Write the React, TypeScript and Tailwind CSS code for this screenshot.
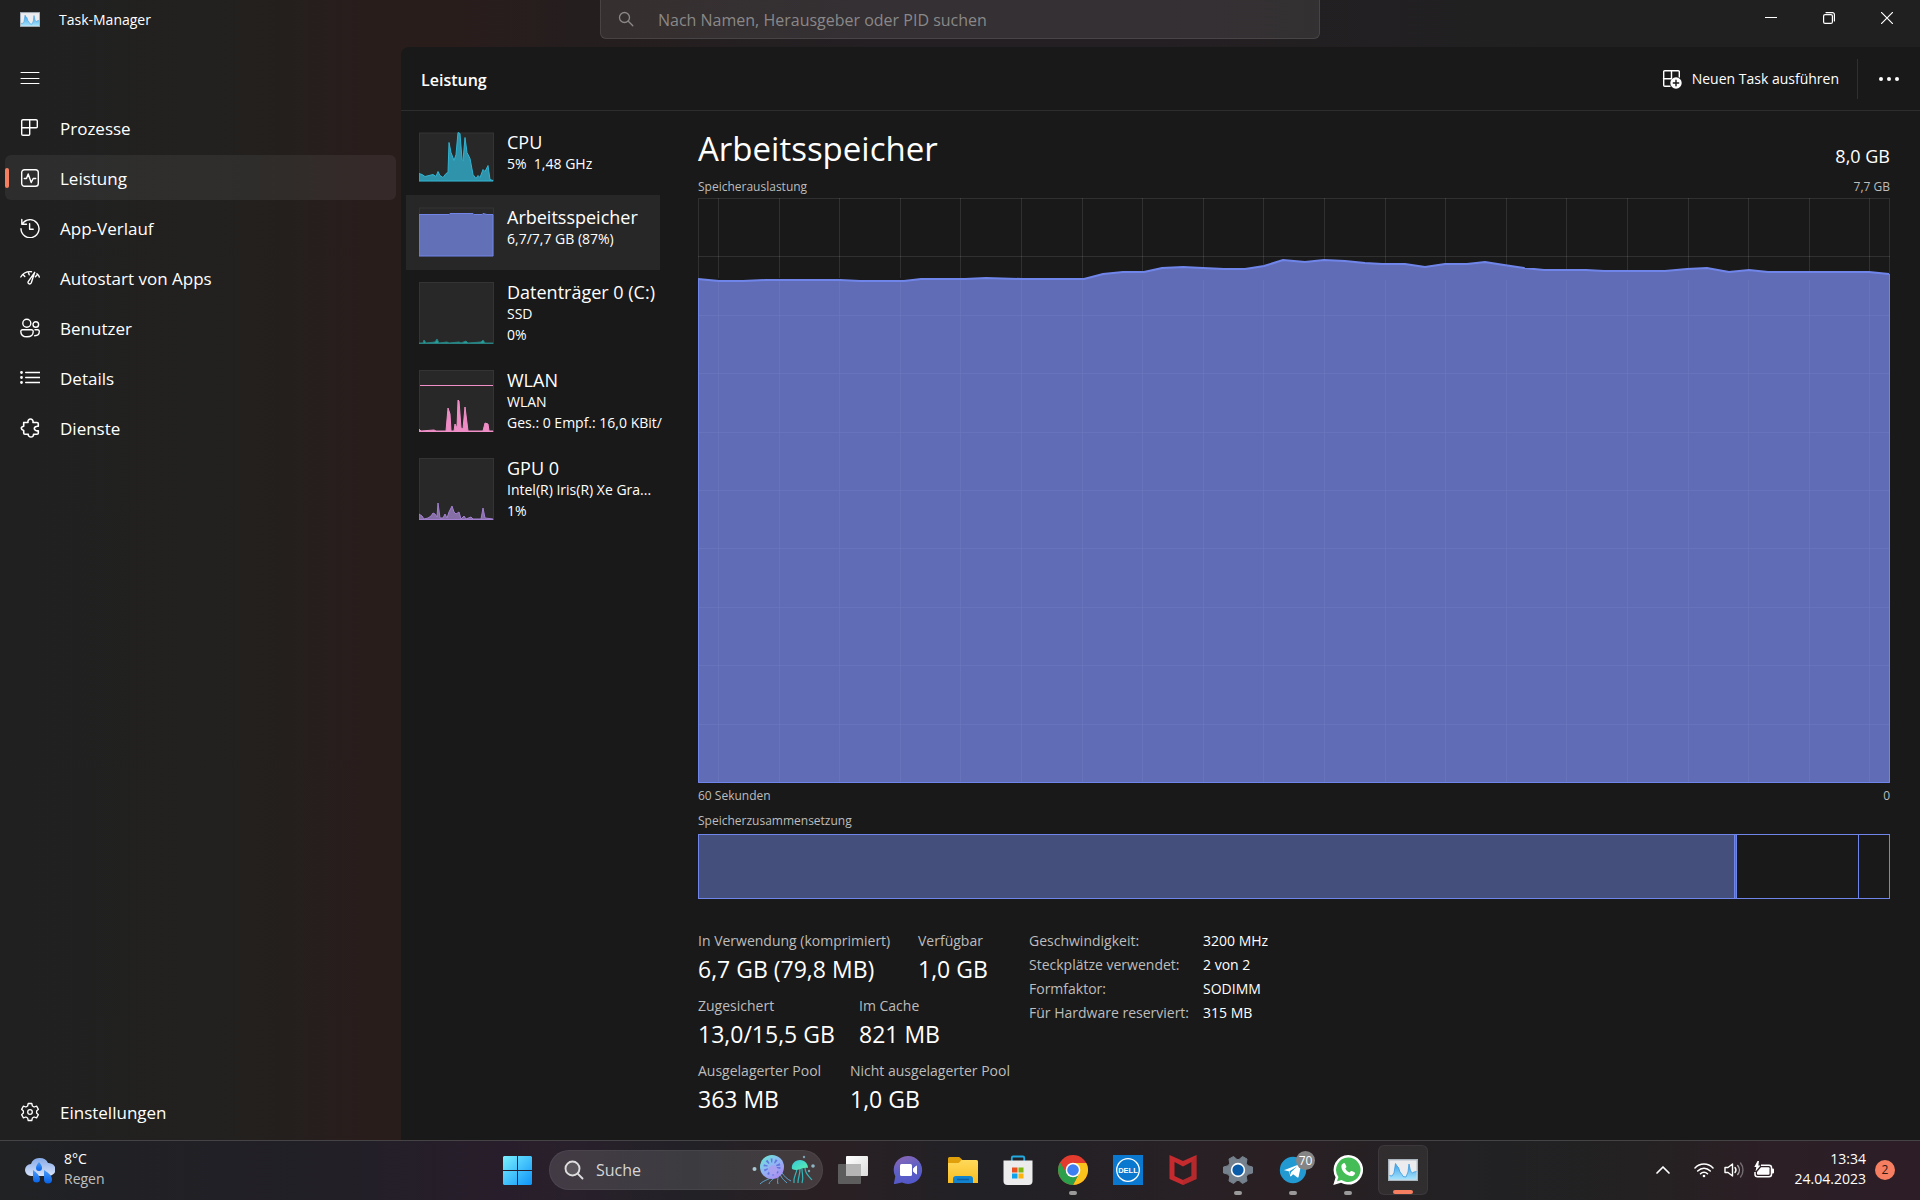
import type { ReactNode } from "react";

const stroke = {
  fill: "none",
  stroke: "currentColor",
  strokeLinecap: "round" as const,
  strokeLinejoin: "round" as const,
};

function LineIcon({ children, width = 1.4 }: { children: ReactNode; width?: number }) {
  return (
    <svg viewBox="0 0 20 20" className="size-5 shrink-0" {...stroke} strokeWidth={width} aria-hidden="true">
      {children}
    </svg>
  );
}

function TaskManagerLogo({ className }: { className: string }) {
  return (
    <svg viewBox="0 0 30 22" className={className} aria-hidden="true">
      <defs>
        <linearGradient id="tmFill" x1="0" y1="0" x2="0" y2="1">
          <stop offset="0" stopColor="#3aa0e8" />
          <stop offset="1" stopColor="#a5e2fc" />
        </linearGradient>
      </defs>
      <rect x="0.7" y="0.7" width="28.6" height="20.6" fill="#ececee" stroke="#aab4bd" strokeWidth="1.4" />
      <path
        d="M1.5 16.5 4 17l2-3L7.5 4.5 9 7l1.500 1.500L12 13l2 2.500 1 2 3 .5 2-5 1-8 1.500 7 2 2 1.500-1 2.500-.5V20.500H1.500Z"
        fill="url(#tmFill)"
      />
      <path
        d="M1.500 16.500 4 17l2-3L7.500 4.500 9 7l1.500 1.500L12 13l2 2.500 1 2 3 .5 2-5 1-8 1.500 7 2 2 1.500-1 2.500-.5"
        fill="none"
        stroke="#3a9be0"
        strokeWidth="0.8"
      />
    </svg>
  );
}

const navItems: { label: string; icon: ReactNode; active?: boolean }[] = [
  {
    label: "Prozesse",
    icon: (
      <LineIcon>
        <path d="M3 1.700h13a1.300 1.300 0 0 1 1.300 1.300v5.700a1 1 0 0 1-1 1H9.700v6.600a1 1 0 0 1-1 1H3A1.300 1.300 0 0 1 1.700 16V3A1.300 1.300 0 0 1 3 1.700ZM9.700 1.700v8H1.700" />
      </LineIcon>
    ),
  },
  {
    label: "Leistung",
    active: true,
    icon: (
      <LineIcon>
        <rect x="1.700" y="1.700" width="16.600" height="16.600" rx="2.800" />
        <path d="M4.300 10.500h2.200L8.200 6l3 8.500 2-4h2.500" />
      </LineIcon>
    ),
  },
  {
    label: "App-Verlauf",
    icon: (
      <LineIcon>
        <path d="M1.800 1.500v4.700h4.700M2.300 6A9 9 0 1 1 1 10.800M9.600 5.700v5.500h3.600" />
      </LineIcon>
    ),
  },
  {
    label: "Autostart von Apps",
    icon: (
      <LineIcon>
        <path d="M.800 9C3 5 6.500 3.300 11.500 3.700M17 5.700c1.200.9 2 2 2.300 3.300M3 6.500l1.800 2M8.200 4l1 2.800M17 7l-1.600 1.800M14.700 4.300 8.200 13.700c-.5 1 .2 2.300 1.300 2.300 1 0 1.500-.5 1.800-1.200Z" />
      </LineIcon>
    ),
  },
  {
    label: "Benutzer",
    icon: (
      <LineIcon>
        <circle cx="6.800" cy="5.300" r="4" />
        <circle cx="15.800" cy="6.500" r="2.800" />
        <path d="M2.500 11.800h9a1.700 1.700 0 0 1 1.700 1.700c0 3.500-2.700 5.300-6.200 5.300s-6.200-1.800-6.200-5.300a1.700 1.700 0 0 1 1.700-1.700ZM15 11.800h2.600a1.700 1.700 0 0 1 1.700 1.700c0 2.500-1.800 4.200-4.600 4.300" />
      </LineIcon>
    ),
  },
  {
    label: "Details",
    icon: (
      <LineIcon>
        <path d="M5.700 4.500h14M5.700 9.500h14M5.700 14.500h14" />
        <path d="M1.500 4.500h.01M1.500 9.500h.01M1.500 14.500h.01" strokeWidth="2.800" />
      </LineIcon>
    ),
  },
  {
    label: "Dienste",
    icon: (
      <LineIcon width={1.6}>
        <path d="M4 4.500h4C7.500 2.500 9 1 10.500 1s3 1.500 2.500 3.500h4a1.300 1.300 0 0 1 1.300 1.300v2.500c-2-.4-4 .7-4 2.200s2 2.700 4 2.200V15a1.300 1.300 0 0 1-1.300 1.300h-3.500c.3 1.600-1 2.700-2.500 2.700s-3-1.100-2.700-2.700H5A1.300 1.300 0 0 1 3.700 15v-2.500C2 12 1.300 11.200 1.300 10.300S2 8.600 3.700 8.300V4.500" />
      </LineIcon>
    ),
  },
];

function GearIcon() {
  return (
    <LineIcon width={1.3}>
      <path d="M8.200 1.500h3.600l.6 2.500 1.700 1 2.500-.8 1.800 3.100L16.600 9v2l1.800 1.700-1.800 3.100-2.500-.8-1.700 1-.6 2.500H8.200L7.600 16l-1.700-1-2.500.8-1.800-3.100L3.400 11V9L1.600 7.300l1.800-3.100 2.500.8 1.700-1Z" />
      <circle cx="10" cy="10" r="2.300" />
    </LineIcon>
  );
}

function NavButton({ label, icon, active }: { label: string; icon: ReactNode; active?: boolean }) {
  return (
    <button
      type="button"
      aria-current={active ? "page" : undefined}
      className={
        active
          ? "relative flex h-[45px] w-full items-center gap-5 rounded-md bg-white/6 px-[15px] text-left text-[17px]"
          : "relative flex h-[45px] w-full items-center gap-5 rounded-md px-[15px] text-left text-[17px]"
      }
    >
      {active && <span className="absolute left-0 h-5 w-1 rounded-full bg-[#f57f60]" />}
      {icon}
      <span className="pt-0.5">{label}</span>
    </button>
  );
}

type Perf = {
  title: string;
  lines: string[];
  active?: boolean;
  short?: boolean;
  color: string;
  fill: string;
  area: string;
  marker?: number;
};

const perfItems: Perf[] = [
  {
    title: "CPU",
    lines: ["5%  1,48 GHz"],
    short: true,
    color: "#2fb4d3",
    fill: "#2f94ab",
    area: "0,41 3,42 6,44 10,43 14,42 17,44 19,39 21,43 24,45 27,41 29,40 30,10 32,20 35,28 37,22 39,0 41,1 43,27 44,28 46,5 48,20 51,26 54,42 57,46 59,43 61,45 64,37 66,39 69,33 71,47 74,48",
  },
  {
    title: "Arbeitsspeicher",
    lines: ["6,7/7,7 GB (87%)"],
    short: true,
    active: true,
    color: "#7184e8",
    fill: "#6270b8",
    area: "0,7 30,7 31,6 54,6 55,7 63,7 64,6 68,7 74,7",
  },
  {
    title: "Datenträger 0 (C:)",
    lines: ["SSD", "0%"],
    color: "#27807f",
    fill: "#24a09a",
    area: "0,61 4,61 5,58 7,61 16,60 18,57 20,61 28,60 30,61 40,60 42,61 47,59 49,61 62,60 64,58 66,61 74,61",
  },
  {
    title: "WLAN",
    lines: ["WLAN", "Ges.: 0 Empf.: 16,0 KBit/"],
    color: "#f08fc8",
    fill: "#ef8cc6",
    area: "0,59 2,61 15,60 17,61 27,61 29,38 31,44 32,61 35,61 36,54 38,58 39,30 40,31 42,58 44,59 46,37 49,61 64,61 66,53 69,54 70,61 74,61",
    marker: 15,
  },
  {
    title: "GPU 0",
    lines: ["Intel(R) Iris(R) Xe Gra...", "1%"],
    color: "#a280cf",
    fill: "#866fa5",
    area: "0,56 3,58 5,61 9,60 12,58 14,55 16,56 18,59 19,45 21,60 24,60 26,56 28,60 30,54 33,48 35,54 37,56 40,54 42,61 45,58 47,61 52,59 54,61 62,61 64,50 66,60 74,61",
  },
];

function PerfCard({ item }: { item: Perf }) {
  const h = item.short ? 49 : 62;
  return (
    <button
      type="button"
      className={
        item.active
          ? "flex w-[254px] items-start gap-[13px] bg-[#272727] pt-3 pb-[13px] pl-[13px] text-left"
          : "flex w-[254px] items-start gap-[13px] pt-3 pb-[13px] pl-[13px] text-left"
      }
    >
      <svg
        viewBox={`0 0 75 ${h}`}
        className={item.short ? "h-[50px] w-[75px] shrink-0" : "h-[62px] w-[75px] shrink-0"}
        aria-hidden="true"
      >
        <rect x="0.5" y="0.5" width="74" height={h - 1} fill="#282828" stroke="#343434" />
        <polygon points={`0,${h - 0.5} ${item.area} 74,${h - 0.5}`} fill={item.fill} stroke={item.color} />
        {item.marker && <path d={`M1 ${item.marker + 0.5}H74`} stroke={item.color} />}
      </svg>
      <span className="flex flex-col whitespace-pre">
        <span className="text-lg leading-[21px]">{item.title}</span>
        {item.lines.map((l) => (
          <span key={l} className="text-sm leading-[21px]">
            {l}
          </span>
        ))}
      </span>
    </button>
  );
}

const usage =
  "0,81 21,83 45,83 67,82 142,82 162,83 206,83 223,81 267,81 288,80 324,81 386,81 405,76 425,74 446,74 464,70 485,69 505,70 526,71 547,71 566,68 585,62 607,64 626,62 647,63 667,65 684,66 707,66 727,69 747,66 769,66 787,64 806,67 826,70 846,72 888,72 906,73 967,73 989,71 1009,70 1031,74 1051,72 1070,74 1171,74 1191,76";

function UsageChart() {
  const vertical = Array.from({ length: 20 }, (_, i) => Math.round(20 + i * 60.6) + 0.5);
  const horizontal = Array.from({ length: 9 }, (_, i) => Math.round((i + 1) * 58.4) + 0.5);
  return (
    <svg
      viewBox="0 0 1192 585"
      preserveAspectRatio="none"
      className="block min-h-0 w-full flex-1"
      role="img"
      aria-label="Speicherauslastung"
    >
      <polygon points={`0,585 ${usage} 1192,585`} fill="#606db6" />
      <g stroke="#ffffff" strokeOpacity="0.1">
        {vertical.map((x) => (
          <path key={x} d={`M${x} 0V80`} />
        ))}
        {horizontal.slice(0, 1).map((y) => (
          <path key={y} d={`M0 ${y}H1192`} />
        ))}
        <rect x="0.5" y="0.5" width="1191" height="584" fill="none" />
      </g>
      <polygon points={`0,585 ${usage} 1192,585`} fill="#606db6" />
      <g stroke="#6d79c0" strokeOpacity="0.6">
        {vertical.map((x) => (
          <path key={x} d={`M${x} 82V585`} />
        ))}
        {horizontal.slice(1).map((y) => (
          <path key={y} d={`M0 ${y}H1192`} />
        ))}
      </g>
      <polyline points={usage} fill="none" stroke="#7085ea" strokeWidth="2" />
      <path d="M0.500 81V584.500H1191.500V76" fill="none" stroke="#7085ea" />
    </svg>
  );
}

function Stat({ label, value, className = "" }: { label: string; value: string; className?: string }) {
  return (
    <div className={className}>
      <dt className="text-sm leading-5 whitespace-nowrap text-[#bdbdbd]">{label}</dt>
      <dd className="pt-0.5 text-[23px] leading-8 whitespace-nowrap">{value}</dd>
    </div>
  );
}

const hardware = [
  ["Geschwindigkeit:", "3200 MHz"],
  ["Steckplätze verwendet:", "2 von 2"],
  ["Formfaktor:", "SODIMM"],
  ["Für Hardware reserviert:", "315 MB"],
];

function App30({ children }: { children: ReactNode }) {
  return (
    <svg viewBox="0 0 30 30" className="size-[30px]" aria-hidden="true">
      {children}
    </svg>
  );
}

const taskbarApps: { name: string; running?: boolean; active?: boolean; badge?: string; icon: ReactNode }[] = [
  {
    name: "Aktive Anwendungen",
    icon: (
      <App30>
        <defs>
          <linearGradient id="tvFill" x1="0" y1="0" x2="1" y2="1">
            <stop offset="0" stopColor="#fff" />
            <stop offset="1" stopColor="#dcdcdc" />
          </linearGradient>
        </defs>
        <rect x="8" y="1" width="22" height="20" rx="1" fill="url(#tvFill)" />
        <rect x="0" y="9" width="23" height="20" rx="1" fill="#5d5d5d" />
        <rect x="8" y="9" width="15" height="12" fill="#b5b5b5" />
      </App30>
    ),
  },
  {
    name: "Chat",
    icon: (
      <App30>
        <defs>
          <linearGradient id="chatFill" x1="0" y1="0" x2="0.300" y2="1">
            <stop offset="0" stopColor="#8f68b4" />
            <stop offset="0.600" stopColor="#5b5fc7" />
            <stop offset="1" stopColor="#5558c8" />
          </linearGradient>
        </defs>
        <path d="M15 1a14 14 0 1 1-6 26.600L2 29c-.8.200-1.300-.3-1-1l1.300-6.500A14 14 0 0 1 15 1Z" fill="url(#chatFill)" />
        <rect x="7" y="9" width="12" height="12" rx="1.500" fill="#fff" />
        <path d="m20.500 13.500 3-2.500v8l-3-2.500Z" fill="#fff" stroke="#fff" strokeLinejoin="round" />
      </App30>
    ),
  },
  {
    name: "Explorer",
    icon: (
      <App30>
        <defs>
          <linearGradient id="folderFill" x1="0" y1="0" x2="0" y2="1">
            <stop offset="0" stopColor="#ffd95a" />
            <stop offset="1" stopColor="#f9bd22" />
          </linearGradient>
        </defs>
        <path d="M0 3.500A1.500 1.500 0 0 1 1.500 2h8.700c1 0 1.500.3 2.200 1l2.100 2H28a2 2 0 0 1 2 2v5H0Z" fill="#e0a00c" />
        <path d="M0 8h9.500c1.200 0 1.700-.4 2.500-1.200L13.500 5H28a2 2 0 0 1 2 2v21H0Z" fill="url(#folderFill)" />
        <path d="M5 28v-4a3 3 0 0 1 3-3h14a3 3 0 0 1 3 3v4Z" fill="#1283cf" />
        <path d="M9 24.500h12" stroke="#0b5ea2" strokeWidth="1.500" />
      </App30>
    ),
  },
  {
    name: "Microsoft Store",
    icon: (
      <App30>
        <path d="M8.800 7V2.800c0-.7.500-1.300 1.300-1.300h9.800c.8 0 1.300.6 1.300 1.300V7" fill="none" stroke="#22abe2" strokeWidth="1.800" />
        <path d="M.500 5.500h29V26a4 4 0 0 1-4 4h-21a4 4 0 0 1-4-4Z" fill="#ececec" />
        <path d="M9 12.500h5.500v5H9Z" fill="#e8501f" />
        <path d="M15.500 12.500h5v5h-5Z" fill="#7fb60f" />
        <path d="M9 18.500h5.500v5H9Z" fill="#0fa3ec" />
        <path d="M15.500 18.500h5v5h-5Z" fill="#fcb40c" />
      </App30>
    ),
  },
  {
    name: "Google Chrome",
    running: true,
    icon: (
      <App30>
        <circle cx="15" cy="15" r="15" fill="#e33b2e" />
        <path d="M15 8h13.300A15 15 0 0 1 15 30l6.100-11.500Z" fill="#fcc21c" />
        <path d="M2.010 7.500A15 15 0 0 0 15 30l6-11.500-6-3-6.100 3Z" fill="#2c9f4b" />
        <circle cx="15" cy="15" r="7.300" fill="#fff" />
        <circle cx="15" cy="15" r="5.800" fill="#3d7ff0" />
      </App30>
    ),
  },
  {
    name: "Dell",
    icon: (
      <App30>
        <rect width="30" height="30" fill="#0a78cf" />
        <circle cx="15" cy="15" r="11.300" fill="none" stroke="#fff" strokeWidth="1.300" />
        <text x="15" y="17.600" textAnchor="middle" fontSize="7.500" fontWeight="700" fill="#fff" fontFamily="Liberation Sans, sans-serif">
          DELL
        </text>
      </App30>
    ),
  },
  {
    name: "McAfee",
    icon: (
      <App30>
        <path d="m1.500 0 13.500 6L28.500 0v24L15 30 1.500 24Zm5 7v14L15 25l8.500-4V7L15 11.500Z" fill="#c52b2e" fillRule="evenodd" />
        <path d="m28.500 0-5 7v14L15 25v5l13.500-6Z" fill="#a8282b" opacity=".6" />
      </App30>
    ),
  },
  {
    name: "Einstellungen",
    running: true,
    icon: (
      <App30>
        <path
          d="M10.500 1.500 14 4.500h2l3.500-3 4.500 2.500-.7 4.300 1.500 2.400 4.700 1.300v6l-4.700 1.300-1.500 2.400.7 4.300-4.500 2.500-3.500-3h-2l-3.500 3L6 26l.7-4.300-1.500-2.400L.500 18v-6l4.700-1.300 1.500-2.400L6 4Z"
          fill="#75818c"
          stroke="#75818c"
          strokeLinejoin="round"
        />
        <circle cx="15" cy="15" r="7.200" fill="#fff" />
        <circle cx="15" cy="15" r="5.600" fill="#0b5ca8" />
      </App30>
    ),
  },
  {
    name: "Telegram",
    running: true,
    badge: "70",
    icon: (
      <App30>
        <circle cx="15" cy="15" r="13.200" fill="#229ad1" />
        <path d="M6.500 15 22 9c.8-.3 1.300.1 1 1.200l-2.400 11.500c-.2 1-.8 1.100-1.500.6l-4-3-2 2c-.3.300-.8.200-.9-.3l-1-4.500-4.700-1.300c-.6-.1-.6-.3 0-.5Z" fill="#fff" />
        <path d="m11.500 16.300 7.500-4.800-6 5.800-.3 3Z" fill="#229ad1" />
      </App30>
    ),
  },
  {
    name: "WhatsApp",
    running: true,
    icon: (
      <App30>
        <path d="M15.200 0A14.800 14.800 0 1 1 8 27.700L.300 30l2.300-7.700A14.800 14.800 0 0 1 15.200 0Z" fill="#fff" />
        <path d="M15.200 2.600A12.200 12.200 0 1 1 8.500 24.900L4 26.300l1.400-4.400A12.200 12.200 0 0 1 15.200 2.600Z" fill="#45bd56" />
        <path
          d="M10.500 8.200c.6-.3 1.300-.1 1.600.5l1.200 2.600c.2.500.1 1-.3 1.400l-.8.900c1 2 2.400 3.200 4.300 4l1-1.200c.4-.4.900-.5 1.400-.3l2.500 1.200c.6.300.7.800.5 1.400-.6 1.700-2.200 2.600-3.800 2.400-4.900-.7-9.200-4.800-9.700-9.200-.2-1.500.700-3 2.100-3.700Z"
          fill="#fff"
        />
      </App30>
    ),
  },
  {
    name: "Task-Manager",
    running: true,
    active: true,
    icon: <TaskManagerLogo className="h-[22px] w-[30px]" />,
  },
];

function Jellyfish() {
  return (
    <svg viewBox="0 0 64 32" className="h-8 w-16 shrink-0" fill="none" aria-hidden="true">
      <defs>
        <linearGradient id="jellyBig" x1="0" y1="0" x2="0.700" y2="1">
          <stop offset="0" stopColor="#62f0d0" />
          <stop offset="0.500" stopColor="#8fb8f4" />
          <stop offset="1" stopColor="#a98cf0" />
        </linearGradient>
        <linearGradient id="jellySmall" x1="0" y1="0" x2="1" y2="1">
          <stop offset="0" stopColor="#34c7d8" />
          <stop offset="1" stopColor="#5df0b0" />
        </linearGradient>
      </defs>
      <path
        d="M22 20c-3 6-9 5-14 10M24 21c-2 5-6 5-7 9M26 22c0 4-1 5 0 8M28 20c2 5 4 6 7 9M30 19c3 4 5 6 9 8"
        stroke="#5fa5cc"
        strokeWidth="1"
      />
      <circle cx="20" cy="13" r="12" fill="url(#jellyBig)" />
      <circle cx="20" cy="13" r="6.500" stroke="#5966d8" strokeWidth="4" strokeDasharray="1.600 2.500" opacity=".8" />
      <circle cx="21" cy="16" r="4.500" fill="#a9a0f0" />
      <path d="M45 15c-1 6-4 8-3 14M48 15c0 6-2 8-2 14M50 15c0 6 2 8 0 14M53 14c0 6 4 8 7 12" stroke="#36b6b8" strokeWidth="1.200" />
      <path d="M40 15c-1-5 3-9 8-9 5 0 8 4 8 8-5-1-10 4-16 1Z" fill="url(#jellySmall)" />
      <circle cx="2.500" cy="15" r="2" fill="#a9c8d4" />
      <circle cx="52" cy="3" r="1.200" fill="#7aa5b0" />
      <circle cx="61" cy="12" r="1.800" fill="#8fb4c4" />
      <circle cx="57" cy="17" r="1.200" fill="#7aa5b0" />
    </svg>
  );
}

function Taskbar() {
  return (
    <footer className="grid h-[60px] shrink-0 grid-cols-[1fr_auto_1fr] items-center border-t border-[#454345] bg-[linear-gradient(90deg,#202224_0%,#221f27_18%,#281e2b_26%,#28202b_30%,#222126_36%,#2a2023_43%,#212126_51%,#2a2024_66%,#212123_78%,#232122_85%,#2c1f25_92%,#2c1d27_100%)] pb-px">
      <button type="button" className="flex w-fit items-center gap-[9px] pl-[25px] text-left">
        <svg viewBox="0 0 30 27" className="h-[27px] w-[30px]" aria-hidden="true">
          <defs>
            <linearGradient id="cloudFill" x1="0" y1="0" x2="0" y2="1">
              <stop offset="0" stopColor="#86aae8" />
              <stop offset="1" stopColor="#d7e3fa" />
            </linearGradient>
            <linearGradient id="dropFill" x1="0" y1="0" x2="0" y2="1">
              <stop offset="0" stopColor="#4a9cf8" />
              <stop offset="1" stopColor="#0561e8" />
            </linearGradient>
          </defs>
          <path d="M6 7a9 8 0 0 1 17-1 7 6.500 0 0 1 1 13H6A6 6 0 0 1 6 7Z" fill="url(#cloudFill)" />
          <path d="M14 5c2 2.500 3 4 3 6a3 3 0 0 1-6 0c0-2 1-3.500 3-6Z" fill="url(#dropFill)" />
          <path d="M8 13c4 3 7 6 7 9a3.500 3.500 0 0 1-7 0ZM19 13c5 3 8 6 8 9.500a4 4 0 0 1-8 0Z" fill="url(#dropFill)" />
        </svg>
        <span className="flex flex-col pb-0.5 text-sm leading-5">
          <span>8°C</span>
          <span className="text-[#c0c0c0]">Regen</span>
        </span>
      </button>

      <div className="flex items-center gap-[5px]">
        <button type="button" aria-label="Start" className="flex h-[50px] w-[50px] items-center justify-center">
          <svg viewBox="0 0 29 29" className="size-[29px]" aria-hidden="true">
            <defs>
              <linearGradient id="winFill" gradientUnits="userSpaceOnUse" x1="0" y1="0" x2="29" y2="29">
                <stop offset="0" stopColor="#7af0ff" />
                <stop offset="1" stopColor="#0e94f8" />
              </linearGradient>
            </defs>
            <path d="M1 0h13v14H0V1ZM15 0h13l1 1v13H15ZM0 15h14v14H1l-1-1ZM15 15h14v13l-1 1H15Z" fill="url(#winFill)" />
          </svg>
        </button>
        <label className="ml-0.5 flex h-10 w-[274px] items-center rounded-full border border-white/5 bg-white/12 pr-1.5 pl-3.5">
          <svg viewBox="0 0 20 20" className="size-5 shrink-0 text-[#dedede]" {...stroke} strokeWidth="1.900" aria-hidden="true">
            <circle cx="8.500" cy="8.500" r="7" fill="#ffffff22" />
            <path d="m13.700 13.700 4.800 4.800" />
          </svg>
          <input
            type="search"
            aria-label="Suche"
            placeholder="Suche"
            className="min-w-0 flex-1 bg-transparent pl-3 text-base outline-none placeholder:text-[#d6d6d6]"
          />
          <Jellyfish />
        </label>
        {taskbarApps.map((app) => (
          <button
            key={app.name}
            type="button"
            aria-label={app.name}
            className={
              app.active
                ? "relative flex h-[50px] w-[50px] items-center justify-center rounded-md border border-white/5 bg-white/6"
                : "relative flex h-[50px] w-[50px] items-center justify-center"
            }
          >
            {app.icon}
            {app.badge && (
              <span className="absolute top-1.5 right-[3px] flex size-[19px] items-center justify-center rounded-full bg-[#858585] text-xs">
                {app.badge}
              </span>
            )}
            {app.running && (
              <span
                className={
                  app.active
                    ? "absolute bottom-0 h-1 w-5 rounded-full bg-[#f57f60]"
                    : "absolute bottom-0 h-1 w-2 rounded-full bg-[#9a9a9a]"
                }
              />
            )}
          </button>
        ))}
      </div>

      <div className="flex items-center justify-end pr-[25px]">
        <button type="button" aria-label="Ausgeblendete Symbole einblenden" className="mr-[23px]">
          <svg viewBox="0 0 16 16" className="size-4" {...stroke} strokeWidth="1.700" aria-hidden="true">
            <path d="m2 11 6-6 6 6" />
          </svg>
        </button>
        <button type="button" aria-label="Netzwerk, Ton und Akku" className="flex items-center gap-2.5">
          <svg viewBox="0 0 20 16" className="h-4 w-5" {...stroke} strokeWidth="1.500" aria-hidden="true">
            <path d="M1 6c5-5.300 13-5.300 18 0M3.700 9c3.700-3.800 8.900-3.800 12.600 0M6.500 11.800c2-2.100 5-2.100 7 0" />
            <circle cx="10" cy="14" r="1.300" fill="currentColor" stroke="none" />
          </svg>
          <svg viewBox="0 0 20 20" className="size-5" {...stroke} strokeWidth="1.400" aria-hidden="true">
            <path d="M1 7.500h3L8.500 4v12L4 12.500H1Z" />
            <path d="M11 7.500c1.200 1.500 1.200 3.500 0 5" />
            <path d="M13.700 5.500c2.200 2.600 2.200 6.400 0 9" opacity=".6" />
            <path d="M16.500 3c3.300 4 3.300 10 0 14" opacity=".35" />
          </svg>
          <svg viewBox="0 0 20 18" className="h-[18px] w-5" fill="none" aria-hidden="true">
            <path d="M7 4.200h8a2.500 2.500 0 0 1 2.500 2.500v6.600a2.500 2.500 0 0 1-2.500 2.500H3.500A2.500 2.500 0 0 1 1 13.300V11" stroke="#fff" strokeWidth="1.500" />
            <path d="M7 6.200h7.500a1 1 0 0 1 1 1v5.600a1 1 0 0 1-1 1H4a1 1 0 0 1-1-1V11Z" fill="#fff" />
            <path d="M18 7.500h1a1 1 0 0 1 1 1v3a1 1 0 0 1-1 1h-1ZM3.500 0 .300 6h2L1.500 10.500 6.500 4.500H4.300L5 0Z" fill="#fff" />
          </svg>
        </button>
        <button type="button" className="ml-[21px] flex items-center gap-[9px]">
          <span className="flex flex-col pb-0.5 text-right text-sm leading-5">
            <span>13:34</span>
            <span>24.04.2023</span>
          </span>
          <span className="flex size-5 items-center justify-center rounded-full bg-[#f57f60] text-xs text-[#2a1a18]">2</span>
        </button>
      </div>
    </footer>
  );
}

export default function App() {
  return (
    <div className="flex h-screen flex-col overflow-hidden bg-[#202020] font-['Open_Sans','Noto_Sans',sans-serif] text-white">
      <div className="flex min-h-0 flex-1 flex-col bg-[linear-gradient(90deg,#202021_0%,#22211f_11%,#241f1d_15%,#291d1c_19%,#291d1c_24%,#251e1e_30%,#231f22_45%,#241f22_60%,#202021_80%)]">
        <header className="grid h-[47px] shrink-0 grid-cols-[1fr_720px_1fr] items-start">
          <div className="flex h-[39px] items-center gap-[19px] pl-5">
            <TaskManagerLogo className="h-[15px] w-5" />
            <h1 className="text-sm">Task-Manager</h1>
          </div>
          <label className="flex h-[39px] items-center gap-6 rounded-b-md border border-t-0 border-white/10 bg-white/8 px-[17px] text-[#8a8888]">
            <svg viewBox="0 0 16 16" className="size-4 shrink-0" {...stroke} strokeWidth="1.300" aria-hidden="true">
              <circle cx="6.500" cy="6.500" r="5" />
              <path d="m10.300 10.300 4.500 4.500" />
            </svg>
            <input
              type="search"
              aria-label="Nach Namen, Herausgeber oder PID suchen"
              placeholder="Nach Namen, Herausgeber oder PID suchen"
              className="min-w-0 flex-1 bg-transparent pt-0.5 text-base text-white outline-none placeholder:text-[#8a8888]"
            />
          </label>
          <div className="flex justify-end pr-1">
            <button type="button" aria-label="Minimieren" className="flex h-9 w-[58px] items-center justify-center">
              <svg viewBox="0 0 12 12" className="size-3" stroke="currentColor" aria-hidden="true">
                <path d="M0 5.500h12" />
              </svg>
            </button>
            <button type="button" aria-label="Verkleinern" className="flex h-9 w-[58px] items-center justify-center">
              <svg viewBox="0 0 12 12" className="size-3" {...stroke} strokeWidth="1.200" aria-hidden="true">
                <rect x="0.600" y="2.600" width="8.800" height="8.800" rx="1.500" />
                <path d="M3 .600h6.400a2 2 0 0 1 2 2V9" />
              </svg>
            </button>
            <button type="button" aria-label="Schließen" className="flex h-9 w-[58px] items-center justify-center">
              <svg viewBox="0 0 12 12" className="size-3" {...stroke} strokeWidth="1.200" aria-hidden="true">
                <path d="m0 0 12 12M12 0 0 12" />
              </svg>
            </button>
          </div>
        </header>

        <div className="flex min-h-0 flex-1">
          <nav aria-label="Navigation" className="flex w-[401px] shrink-0 flex-col gap-[5px] px-[5px] pt-2 pb-1.5">
            <button type="button" aria-label="Navigation öffnen" className="flex h-[45px] w-[50px] items-center px-[15px]">
              <LineIcon width={1}>
                <path d="M1 4.500h18M1 10.500h18M1 15.500h18" />
              </LineIcon>
            </button>
            {navItems.map((item) => (
              <NavButton key={item.label} {...item} />
            ))}
            <div className="mt-auto">
              <NavButton label="Einstellungen" icon={<GearIcon />} />
            </div>
          </nav>

          <main className="flex min-w-0 flex-1 flex-col rounded-tl-lg bg-[#191919]">
            <div className="flex h-16 shrink-0 items-center border-b border-[#2d2d2d] pr-1.5 pl-5">
              <h2 className="flex-1 pt-[3px] text-base font-semibold">Leistung</h2>
              <button type="button" className="flex items-center gap-2.5 pr-[18px] text-sm">
                <svg viewBox="0 0 20 20" className="size-5" {...stroke} strokeWidth="1.400" aria-hidden="true">
                  <path d="M17.300 8V2.700a1 1 0 0 0-1-1H2.700a1 1 0 0 0-1 1v13.600a1 1 0 0 0 1 1H8M9.500 1.700v8h-8" />
                  <circle cx="14" cy="14" r="5.700" fill="#fff" stroke="none" />
                  <path d="M14 11.300v5.400M11.300 14h5.400" stroke="#191919" />
                </svg>
                Neuen Task ausführen
              </button>
              <span className="h-10 w-px bg-[#303030]" />
              <button type="button" aria-label="Weitere Optionen" className="ml-1.5 flex h-10 w-[50px] items-center justify-center">
                <svg viewBox="0 0 20 4" className="h-1 w-5" fill="currentColor" aria-hidden="true">
                  <circle cx="2" cy="2" r="2" />
                  <circle cx="10" cy="2" r="2" />
                  <circle cx="18" cy="2" r="2" />
                </svg>
              </button>
            </div>

            <div className="flex min-h-0 flex-1">
              <aside aria-label="Ressourcen" className="w-[297px] shrink-0 pt-[9px] pl-[5px]">
                {perfItems.map((item) => (
                  <PerfCard key={item.title} item={item} />
                ))}
              </aside>

              <section className="flex min-w-0 flex-1 flex-col pr-[30px] pb-[25px]">
                <div className="flex h-16 items-end justify-between pb-[3px]">
                  <h3 className="text-[33px] leading-[46px]">Arbeitsspeicher</h3>
                  <span className="text-lg leading-8">8,0 GB</span>
                </div>
                <div className="flex h-[23px] items-center justify-between text-xs text-[#bdbdbd]">
                  <span>Speicherauslastung</span>
                  <span>7,7 GB</span>
                </div>
                <UsageChart />
                <div className="flex h-[25px] items-center justify-between text-xs text-[#bdbdbd]">
                  <span>60 Sekunden</span>
                  <span>0</span>
                </div>
                <div className="flex h-[26px] items-center text-xs text-[#bdbdbd]">Speicherzusammensetzung</div>
                <div className="flex h-[65px] shrink-0 border border-[#7085ea]">
                  <div className="w-[87%] bg-[#454f7c]" />
                  <div className="w-[3px] border-x border-[#7085ea] bg-[#5c6bb8]" />
                  <div className="flex-1" />
                  <div className="w-[31px] border-l border-[#7085ea]" />
                </div>
                <div className="flex items-start pt-8">
                  <dl className="flex w-[331px] flex-col gap-[11px]">
                    <div className="flex">
                      <Stat className="w-[220px]" label="In Verwendung (komprimiert)" value="6,7 GB (79,8 MB)" />
                      <Stat label="Verfügbar" value="1,0 GB" />
                    </div>
                    <div className="flex">
                      <Stat className="w-[161px]" label="Zugesichert" value="13,0/15,5 GB" />
                      <Stat label="Im Cache" value="821 MB" />
                    </div>
                    <div className="flex">
                      <Stat className="w-[152px]" label="Ausgelagerter Pool" value="363 MB" />
                      <Stat label="Nicht ausgelagerter Pool" value="1,0 GB" />
                    </div>
                  </dl>
                  <table className="text-sm">
                    <tbody>
                      {hardware.map(([label, value]) => (
                        <tr key={label} className="h-6 align-top leading-5">
                          <th scope="row" className="w-[174px] p-0 text-left font-normal whitespace-nowrap text-[#bdbdbd]">
                            {label}
                          </th>
                          <td className="p-0">{value}</td>
                        </tr>
                      ))}
                    </tbody>
                  </table>
                </div>
              </section>
            </div>
          </main>
        </div>
      </div>
      <Taskbar />
    </div>
  );
}
